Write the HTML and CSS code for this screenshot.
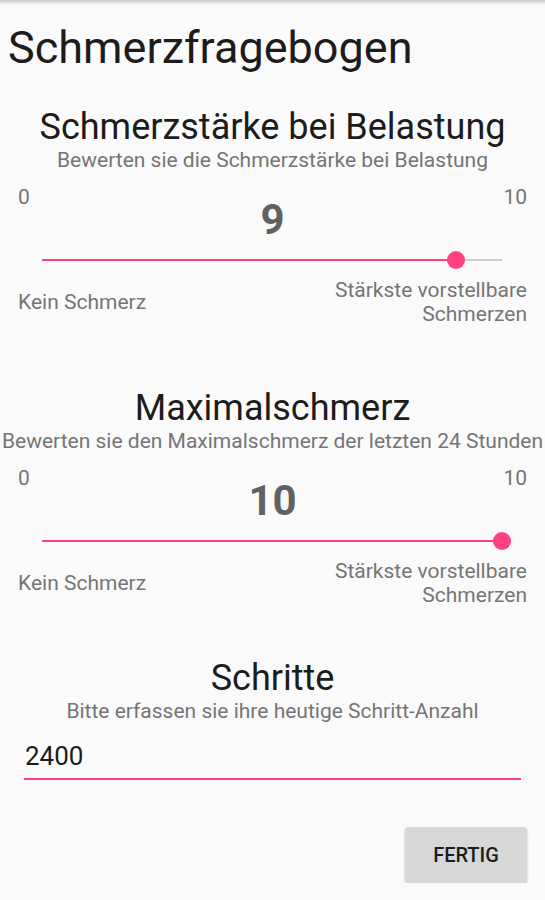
FILE: index.html
```html
<!DOCTYPE html>
<html lang="de">
<head>
    <meta charset="UTF-8">
    <meta name="viewport" content="width=device-width, initial-scale=1.0">
    <title>Schmerzfragebogen</title>
    <link rel="stylesheet" href="styles.css">
</head>
<body>
    <div class="top-shadow"></div>
    <h1 class="page-title">Schmerzfragebogen</h1>

    <section class="question">
        <h2 class="question-title">Schmerzstärke bei Belastung</h2>
        <p class="question-hint">Bewerten sie die Schmerzstärke bei Belastung</p>
        <div class="scale-head">
            <span class="scale-min">0</span>
            <span class="scale-value">9</span>
            <span class="scale-max">10</span>
        </div>
        <div class="slider">
            <div class="slider-fill" style="width: 90%"></div>
            <div class="slider-thumb" style="left: 90%"></div>
        </div>
        <div class="scale-labels">
            <span>Kein Schmerz</span>
            <span class="label-right">Stärkste vorstellbare<br>Schmerzen</span>
        </div>
    </section>

    <section class="question">
        <h2 class="question-title">Maximalschmerz</h2>
        <p class="question-hint">Bewerten sie den Maximalschmerz der letzten 24 Stunden</p>
        <div class="scale-head">
            <span class="scale-min">0</span>
            <span class="scale-value">10</span>
            <span class="scale-max">10</span>
        </div>
        <div class="slider">
            <div class="slider-fill" style="width: 100%"></div>
            <div class="slider-thumb" style="left: 100%"></div>
        </div>
        <div class="scale-labels">
            <span>Kein Schmerz</span>
            <span class="label-right">Stärkste vorstellbare<br>Schmerzen</span>
        </div>
    </section>

    <section class="question steps">
        <h2 class="question-title">Schritte</h2>
        <p class="question-hint">Bitte erfassen sie ihre heutige Schritt-Anzahl</p>
        <input class="steps-input" type="text" value="2400">
    </section>

    <div class="actions">
        <button class="done-button">FERTIG</button>
    </div>
</body>
</html>
```

FILE: styles.css
```css
body {
    margin: 0;
    background: #fafafa;
    font-family: Roboto, "Liberation Sans", sans-serif;
    color: #1c1c1c;
}

.top-shadow {
    height: 5px;
    background: linear-gradient(#c8c8c8, #fafafa);
}

.page-title {
    margin: 18px 0 0 8px;
    font-size: 45px;
    font-weight: 400;
    line-height: 50px;
}

.question {
    margin-top: 34px;
    text-align: center;
}

.question + .question {
    margin-top: 62px;
}

.question-title {
    margin: 0;
    font-size: 36px;
    font-weight: 400;
    line-height: 40px;
}

.question-hint {
    margin: 0;
    font-size: 21px;
    line-height: 26px;
    color: #757575;
    white-space: nowrap;
}

.scale-head {
    display: grid;
    grid-template-columns: 1fr auto 1fr;
    align-items: start;
    padding: 0 18px;
    margin-top: 12px;
    font-size: 21px;
    color: #757575;
}

.scale-min {
    text-align: left;
}

.scale-max {
    text-align: right;
}

.scale-value {
    padding-top: 13px;
    font-size: 42px;
    font-weight: 700;
    line-height: 44px;
    color: #616161;
}

/* seekbar */
.slider {
    position: relative;
    height: 2px;
    margin: 17px 43px 0 42px;
    background: #d0d0d0;
}

.slider-fill {
    height: 100%;
    background: #ff4081;
}

.slider-thumb {
    position: absolute;
    top: -8px;
    width: 18px;
    height: 18px;
    margin-left: -9px;
    border-radius: 50%;
    background: #ff4081;
}

.scale-labels {
    display: flex;
    justify-content: space-between;
    align-items: center;
    padding: 0 18px;
    margin-top: 17px;
    font-size: 21px;
    line-height: 24px;
    color: #757575;
}

.label-right {
    text-align: right;
}

.question.steps {
    margin-top: 51px;
}

.steps .question-hint {
    margin-bottom: 17px;
}

.steps-input {
    display: block;
    box-sizing: border-box;
    width: 497px;
    margin: 0 0 0 24px;
    padding: 0 0 7px 1px;
    border: none;
    border-bottom: 2px solid #ff4081;
    background: transparent;
    font-family: inherit;
    font-size: 26px;
    color: #1c1c1c;
    outline: none;
}

.actions {
    display: flex;
    justify-content: flex-end;
    padding: 47px 18px 0 0;
}

.done-button {
    width: 122px;
    height: 56px;
    border: none;
    border-radius: 3px;
    background: #d6d7d7;
    box-shadow: 0 2px 3px rgba(0, 0, 0, 0.2);
    font-family: inherit;
    font-size: 20px;
    font-weight: 500;
    color: #1c1c1c;
}
```
